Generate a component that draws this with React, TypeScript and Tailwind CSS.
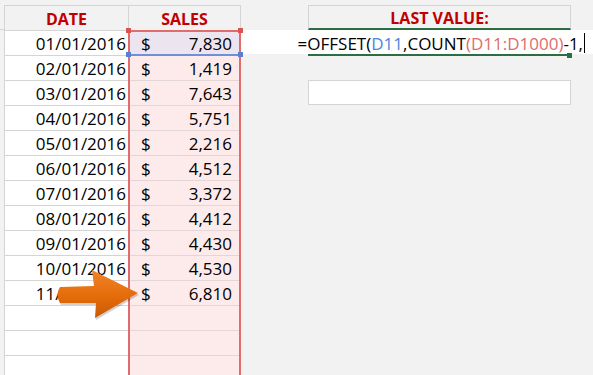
import React from "react";

const rows: [string, string][] = [
  ["01/01/2016", "7,830"],
  ["02/01/2016", "1,419"],
  ["03/01/2016", "7,643"],
  ["04/01/2016", "5,751"],
  ["05/01/2016", "2,216"],
  ["06/01/2016", "4,512"],
  ["07/01/2016", "3,372"],
  ["08/01/2016", "4,412"],
  ["09/01/2016", "4,430"],
  ["10/01/2016", "4,530"],
  ["11/01/2016", "6,810"],
];

export default function App() {
  return (
    <div className="w-[593px] h-[375px] bg-[#f2f2f2] overflow-hidden relative flex items-start font-['Open_Sans',sans-serif] text-black">
      {/* left strip */}
      <div className="w-[4px] shrink-0 flex flex-col">
        <div className="h-[30px] shrink-0 border-b border-[#d4d4d4]" />
      </div>

      {/* DATE column */}
      <div className="w-[124px] flex flex-col shrink-0">
        <div className="h-[5px] shrink-0" />
        <div className="h-[25px] shrink-0 border-t border-l border-[#d4d4d4] flex items-end justify-center pb-[3px] font-bold text-[16px] leading-none text-[#c00000]">
          DATE
        </div>
        {rows.map(([d]) => (
          <div
            key={d}
            className="h-[25px] shrink-0 bg-white border-t border-l border-[#d4d4d4] flex items-end justify-end pb-[3px] pr-[2px] text-[17px] leading-none"
          >
            {d}
          </div>
        ))}
        {[0, 1, 2].map((i) => (
          <div key={i} className="h-[25px] shrink-0 bg-white border-t border-l border-[#d4d4d4]" />
        ))}
      </div>

      {/* SALES column */}
      <div className="w-[113px] flex flex-col shrink-0">
        <div className="h-[5px] shrink-0" />
        <div className="h-[25px] shrink-0 border-t border-x border-[#d4d4d4] flex items-end justify-center pb-[3px] font-bold text-[16px] leading-none text-[#c00000]">
          SALES
        </div>
        <div className="relative shrink-0 flex flex-col">
          {rows.map(([d, v], i) => (
            <div
              key={d}
              className={
                i === 0
                  ? "h-[25px] shrink-0 bg-[#ece5f0] flex items-end justify-between pb-[3px] pl-[13px] pr-[9px] text-[17px] leading-none"
                  : "h-[25px] shrink-0 bg-[#fdeaea] border-t border-[#e2d6d6] flex items-end justify-between pb-[3px] pl-[13px] pr-[9px] text-[17px] leading-none"
              }
            >
              <span>$</span>
              <span>{v}</span>
            </div>
          ))}
          {[0, 1, 2].map((i) => (
            <div key={i} className="h-[25px] shrink-0 bg-[#fdeaea] border-t border-[#e2d6d6]" />
          ))}
          {/* red range border */}
          <div className="absolute inset-0 border-x-2 border-t-2 border-[#e06c6c] pointer-events-none" />
          {/* blue range bottom */}
          <div className="absolute left-0 right-0 top-[24px] h-[2px] bg-[#6f8fd8]" />
          {/* handles */}
          <div className="absolute left-[-2px] top-[-2px] w-[5px] h-[5px] bg-[#d9534f]" />
          <div className="absolute right-[-2px] top-[-2px] w-[5px] h-[5px] bg-[#d9534f]" />
          <div className="absolute left-[-2px] top-[22px] w-[5px] h-[5px] bg-[#5b7fd0]" />
          <div className="absolute right-[-2px] top-[22px] w-[5px] h-[5px] bg-[#5b7fd0]" />
        </div>
      </div>

      {/* right area */}
      <div className="flex-1 flex flex-col">
        <div className="h-[5px] shrink-0" />
        <div className="h-[25px] shrink-0 pl-[67px] flex">
          <div className="w-[263px] h-full border-t border-x border-[#d4d4d4] border-b-2 border-b-[#2a6e42] flex items-end justify-center pb-[2px] font-bold text-[16px] leading-none text-[#c00000]">
            LAST VALUE:
          </div>
        </div>
        <div className="h-[24px] shrink-0 bg-white flex items-end justify-end pb-[2px] pr-[8px] text-[17px] leading-none whitespace-nowrap">
          <span>=OFFSET(</span>
          <span className="text-[#4f86d9]">D11</span>
          <span>,COUNT</span>
          <span className="text-[#e06c6c]">(D11:D1000)</span>
          <span>-1,</span>
          <span className="ml-[1px] mb-[-1px] w-[1px] h-[20px] bg-black" />
        </div>
        <div className="h-[2px] shrink-0 pl-[67px] flex relative">
          <div className="w-[259px] h-full bg-[#2a6e42]" />
          <div className="w-[5px] h-[5px] bg-[#2a6e42] -mt-[1px]" />
        </div>
        <div className="h-[24px] shrink-0" />
        <div className="pl-[67px] flex shrink-0">
          <div className="w-[263px] h-[25px] bg-white border border-[#d4d4d4]" />
        </div>
      </div>

      {/* orange arrow annotation */}
      <svg
        className="absolute left-[50px] top-[262px] pointer-events-none"
        width="95"
        height="62"
        viewBox="50 262 95 62"
      >
        <defs>
          <linearGradient id="og" x1="0" y1="0" x2="0" y2="1">
            <stop offset="0" stopColor="#f0832a" />
            <stop offset="0.55" stopColor="#e46c0a" />
            <stop offset="1" stopColor="#c85a06" />
          </linearGradient>
        </defs>
        <path
          d="M61 289 L95 288 L93 272 L139 295 L96 320 L97 305 L61 305 Q56 297 61 289 Z"
          fill="rgba(0,0,0,0.18)"
        />
        <path
          d="M60 287 L94 286 L92 270 L138 293 L95 318 L96 303 L60 303 Q55 295 60 287 Z"
          fill="url(#og)"
        />
      </svg>
    </div>
  );
}
